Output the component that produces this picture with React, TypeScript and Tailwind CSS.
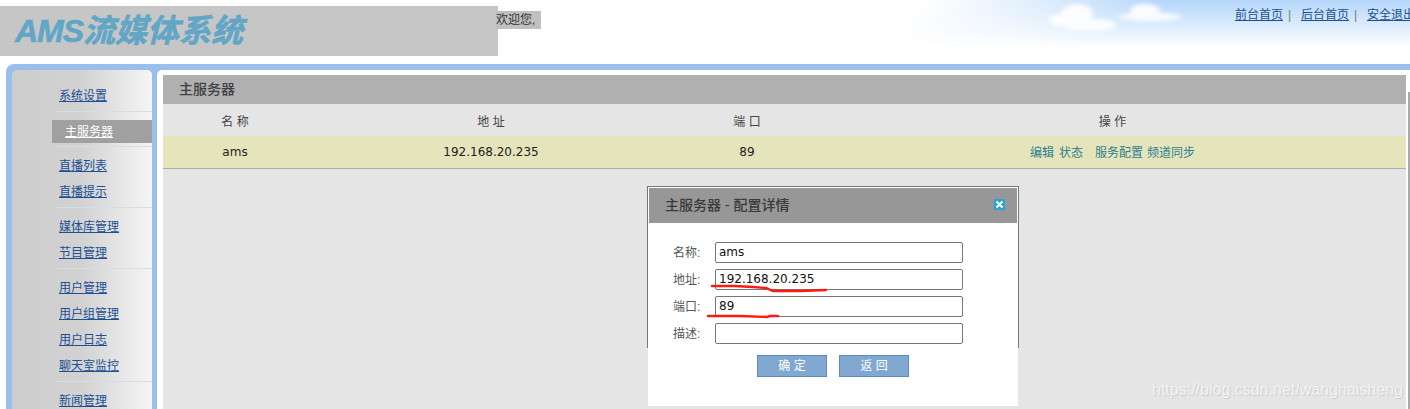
import React from "react";

const FONT = "font-['Liberation_Sans','Noto_Sans_CJK_SC',sans-serif]";
const DATA_FONT = "font-['DejaVu_Sans','Noto_Sans_CJK_SC',sans-serif]";

// sidebar menu, split by the divider lines
const GROUPS: string[][] = [
    ["直播列表", "直播提示"],
    ["媒体库管理", "节目管理"],
    ["用户管理", "用户组管理", "用户日志", "聊天室监控"],
    ["新闻管理"],
];

const SideLink: React.FC<{ label: string }> = ({ label }) => (
    <div className="h-[26px] pl-[47px] flex items-center">
        <a href="#" className="text-[12px] leading-[14px] text-[#1c4f93] underline">{label}</a>
    </div>
);

const Sky: React.FC = () => (
    <svg className="absolute right-0 top-0" width="510" height="64" viewBox="0 0 510 64">
        <defs>
            <linearGradient id="skyV" x1="0" y1="0" x2="0" y2="1">
                <stop offset="0" stopColor="#b4d6fa" />
                <stop offset="0.4" stopColor="#dcecfc" />
                <stop offset="0.75" stopColor="#ffffff" />
            </linearGradient>
            <linearGradient id="skyH" x1="0" y1="0" x2="1" y2="0.15">
                <stop offset="0.05" stopColor="#ffffff" stopOpacity="1" />
                <stop offset="0.3" stopColor="#ffffff" stopOpacity="0.5" />
                <stop offset="0.5" stopColor="#ffffff" stopOpacity="0" />
            </linearGradient>
            <filter id="cloudBlur"><feGaussianBlur stdDeviation="2" /></filter>
        </defs>
        <rect width="510" height="64" fill="url(#skyV)" />
        <rect width="510" height="64" fill="url(#skyH)" />
        <g fill="#ffffff" filter="url(#cloudBlur)" opacity="0.9">
            <ellipse cx="177" cy="14" rx="16" ry="10" />
            <ellipse cx="162" cy="20" rx="13" ry="6" />
            <ellipse cx="190" cy="25" rx="26" ry="6" />
            <ellipse cx="245" cy="10" rx="15" ry="6" />
            <ellipse cx="250" cy="17" rx="32" ry="4" />
        </g>
    </svg>
);

const Field: React.FC<{ label: string; value?: string }> = ({ label, value }) => (
    <div className="flex items-center h-[21px] mb-[6px]">
        <span className="w-[42px] text-[12px] text-[#555555]">{label}</span>
        <div className={`${DATA_FONT} w-[248px] h-[21px] border border-[#777777] rounded-[2px] bg-white pl-[3px] text-[12px] leading-[19px] text-[#111111]`}>
            {value}
        </div>
    </div>
);

const ConfigDialog: React.FC = () => (
    <div className="absolute left-[647px] top-[186px] w-[372px] z-10">
        <div className="h-[162px] border border-[#777777] border-b-0 bg-white px-px pt-px">
            <div className="h-[35px] bg-[#979797] pl-[16px] pr-[12px] flex items-center justify-between">
                <span className="text-[14px] font-medium text-[#3a3a3a]">主服务器 - 配置详情</span>
                <svg width="11" height="11" viewBox="0 0 11 11" className="mb-[3px]">
                    <rect width="11" height="11" rx="1" fill="#2ba3d6" />
                    <path d="M2.5 2.5l6 6M8.5 2.5l-6 6" stroke="#ffffff" strokeWidth="2" />
                </svg>
            </div>
            <div className="pt-[19px] pl-[24px]">
                <Field label="名称:" value="ams" />
                <Field label="地址:" value="192.168.20.235" />
                <Field label="端口:" value="89" />
                <Field label="描述:" />
            </div>
        </div>
        <div className="mx-px h-[58px] bg-white pt-[7px] pl-[109px] flex gap-[12px] items-start">
            <button className="w-[70px] h-[22px] bg-[#80a8d0] border border-[#5b8bbf] text-[12px] text-white">确 定</button>
            <button className="w-[70px] h-[22px] bg-[#80a8d0] border border-[#5b8bbf] text-[12px] text-white">返 回</button>
        </div>
    </div>
);

export default function App() {
    return (
        <div className={`${FONT} relative w-[1410px] h-[409px] overflow-hidden bg-white`}>
            {/* HEADER */}
            <div className="relative h-16">
                <Sky />
                <div className="absolute left-0 top-[6px] w-[498px] h-[50px] bg-[#c6c6c6] pl-[15px] flex items-center">
                    <span className="text-[32px] font-bold italic leading-none text-[#62a6c6] [-webkit-text-stroke:0.6px_#62a6c6]">
                        <span className="tracking-[-1px]">AMS</span>流媒体系统
                    </span>
                </div>
                <span className="absolute left-[496px] top-[11px] h-[18px] w-[45px] bg-[#c0c0c0] text-[12px] leading-[18px] text-[#333333]">欢迎您,</span>
                <div className="absolute left-[1235px] top-[7px] flex whitespace-nowrap text-[12px] leading-[16px]">
                    <a href="#" className="text-[#1c4f93] underline">前台首页</a>
                    <span className="text-[#777777] w-[18px] pl-[5px]">|</span>
                    <a href="#" className="text-[#1c4f93] underline">后台首页</a>
                    <span className="text-[#777777] w-[18px] pl-[5px]">|</span>
                    <a href="#" className="text-[#1c4f93] underline">安全退出</a>
                </div>
            </div>

            {/* BODY */}
            <div className="ml-[6px] h-[345px] rounded-tl-[8px] bg-[#9abfec] pt-[6px] pl-[6px] flex">
                {/* SIDEBAR */}
                <div className="w-[140px] shrink-0 rounded-t-[5px] bg-linear-to-r from-[#cdcdcd] via-[#d2d2d2] to-[#f6f6f6] pt-[13px]">
                    <div className="pb-[2px]">
                        <SideLink label="系统设置" />
                    </div>
                    <div className="ml-[44px] border-t border-[#d5dde8] pt-[8px] pb-[3px]">
                        <div className="-ml-[4px] h-[23px] bg-[#a0a0a0] pl-[13px] flex items-center">
                            <a href="#" className="text-[12px] text-white underline">主服务器</a>
                        </div>
                    </div>
                    {GROUPS.map((group) => (
                        <div key={group[0]}>
                            <div className="ml-[44px] border-t border-[#d5dde8] h-[7px]" />
                            {group.map((label) => <SideLink key={label} label={label} />)}
                            <div className="h-[2px]" />
                        </div>
                    ))}
                </div>

                {/* MAIN PANEL */}
                <div className="ml-[5px] flex-1 rounded-tl-[5px] bg-white pt-[5px] pl-[6px] flex">
                    <div className="w-[1243px] h-[334px] bg-[#e5e5e5]">
                        <div className="h-[29px] bg-[#b0b0b0] pl-4 flex items-center text-[14px] font-medium text-[#3f3f3f]">主服务器</div>
                        <div className="grid grid-cols-[144px_368px_144px_1fr] h-[32px] pt-[3px] items-center text-center text-[12px] text-[#444444]">
                            <span>名 称</span>
                            <span>地 址</span>
                            <span>端 口</span>
                            <span>操 作</span>
                        </div>
                        <div className={`${DATA_FONT} grid grid-cols-[144px_368px_144px_1fr] h-[33px] items-center text-center text-[12px] text-[#222222] bg-[#e5e5bc] border-b border-[#aaaaaa]`}>
                            <span>ams</span>
                            <span>192.168.20.235</span>
                            <span>89</span>
                            <span className={`${FONT} pt-px text-[#2f7f8f] flex justify-center`}>
                                <a href="#">编辑</a>
                                <a href="#" className="ml-[5px]">状态</a>
                                <a href="#" className="ml-3">服务配置</a>
                                <a href="#" className="ml-1">频道同步</a>
                            </span>
                        </div>
                    </div>
                    <div className="ml-[2px] mt-[17px] w-[2px] h-[317px] bg-[#aaaaaa]" />
                </div>
            </div>

            <ConfigDialog />

            {/* red pen marks on the screenshot */}
            <svg className="absolute left-0 top-0 z-20 pointer-events-none" width="1410" height="409" fill="none" stroke="#fb1a12" strokeWidth="2.4" strokeLinecap="round">
                <path d="M712 286 L735 286 L753 287 L766 288 L773 291 L800 291 L826 290" />
                <path d="M708 316 L740 316 L767 317 L770 316 L778 316" />
            </svg>

            <span className="absolute left-[1152px] top-[380px] text-[16px] leading-[20px] text-[#f2f2f2] [text-shadow:1px_1px_1px_#cccccc] z-20">https://blog.csdn.net/wanghaisheng</span>
        </div>
    );
}
